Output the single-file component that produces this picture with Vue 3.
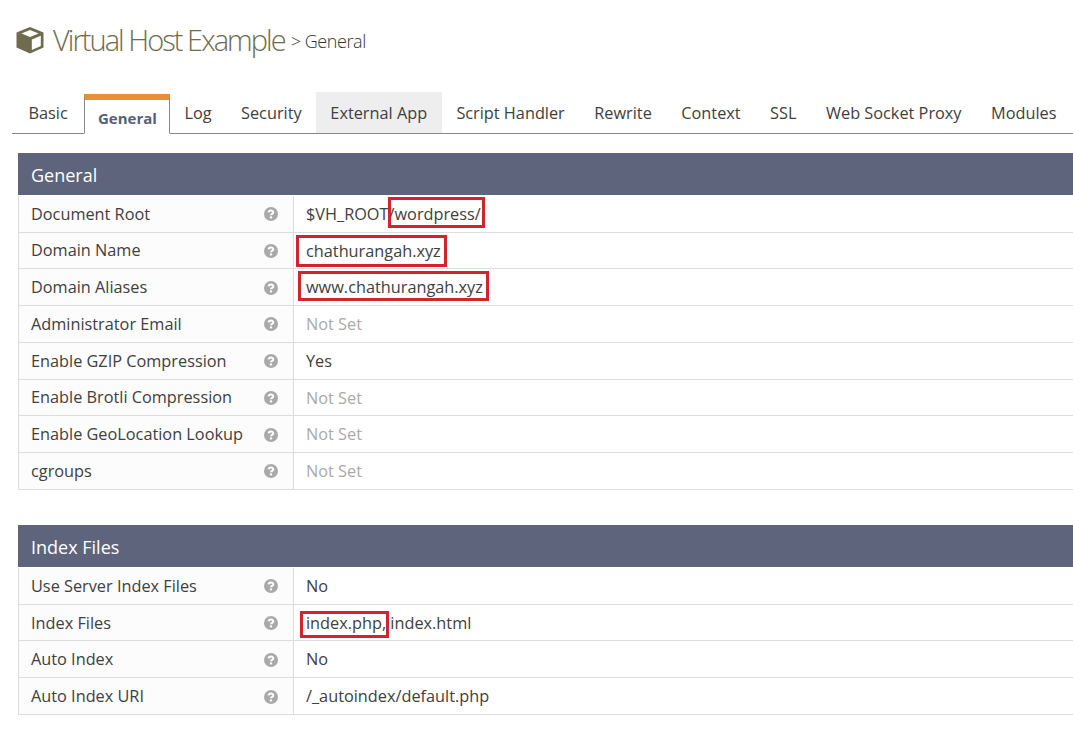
<script setup>
const tabs = ["Basic", "General", "Log", "Security", "External App", "Script Handler", "Rewrite", "Context", "SSL", "Web Socket Proxy", "Modules"]

const sections = [
  {
    title: "General",
    rows: [
      { label: "Document Root", parts: [{ text: "$VH_ROOT" }, { text: "/wordpress/", mark: "m-root" }] },
      { label: "Domain Name", parts: [{ text: "chathurangah.xyz", mark: "m-name" }] },
      { label: "Domain Aliases", parts: [{ text: "www.chathurangah.xyz", mark: "m-alias" }] },
      { label: "Administrator Email", unset: true },
      { label: "Enable GZIP Compression", parts: [{ text: "Yes" }] },
      { label: "Enable Brotli Compression", unset: true },
      { label: "Enable GeoLocation Lookup", unset: true },
      { label: "cgroups", unset: true },
    ],
  },
  {
    title: "Index Files",
    rows: [
      { label: "Use Server Index Files", parts: [{ text: "No" }] },
      { label: "Index Files", parts: [{ text: "index.php,", mark: "m-index" }, { text: " index.html" }] },
      { label: "Auto Index", parts: [{ text: "No" }] },
      { label: "Auto Index URI", parts: [{ text: "/_autoindex/default.php" }] },
    ],
  },
]
</script>

<template>
  <div class="page">
    <h1 class="title">
      <svg class="cube" width="28" height="28" viewBox="0 0 28 28">
        <path d="M14 1 L27.5 6.5 V21.5 L14 27.5 L0.5 21.5 V6.5 Z" fill="#6f6b4f" />
        <path d="M14 4 L22.6 7.6 L14 11 L5.4 7.6 Z" fill="#fff" />
        <path d="M15.8 13.4 L24.8 9.8 V20 L15.8 24 Z" fill="#fff" />
      </svg>
      <span class="title-main">Virtual Host Example</span>
      <span class="title-sub">&gt; General</span>
    </h1>

    <ul class="tabs">
      <li
        v-for="tab in tabs"
        :key="tab"
        :class="{ active: tab === 'General', hover: tab === 'External App' }"
      >
        {{ tab }}
      </li>
    </ul>

    <section v-for="sec in sections" :key="sec.title" class="panel">
      <header>{{ sec.title }}</header>
      <div class="rows">
        <div v-for="row in sec.rows" :key="row.label" class="row">
          <div class="label">
            <span>{{ row.label }}</span>
            <svg class="help" width="14" height="14" viewBox="0 0 14 14">
              <circle cx="7" cy="7" r="7" fill="#a9a9a9" />
              <path d="M4.7 5.4 C4.8 3 9.3 2.9 9.3 5.4 C9.3 6.9 7 6.8 7 8.3" fill="none" stroke="#fff" stroke-width="2" />
              <rect x="5.9" y="9.4" width="2.2" height="2" fill="#fff" />
            </svg>
          </div>
          <div class="value">
            <span v-if="row.unset" class="unset">Not Set</span>
            <template v-else>
              <span v-for="part in row.parts" :key="part.text" :class="part.mark">{{ part.text }}</span>
            </template>
          </div>
        </div>
      </div>
    </section>
  </div>
</template>

<style scoped>
.page {
  width: 1073px;
  height: 737px;
  overflow: hidden;
  background: #fff;
  font-family: "Open Sans", "Liberation Sans", sans-serif;
  color: #404040;
  font-size: 16.3px;
}

.title {
  display: flex;
  align-items: center;
  margin: 0;
  padding: 8px 0 0 15.5px;
  height: 70px;
  box-sizing: border-box;
  font-weight: 300;
}

.cube {
  margin-right: 9.5px;
  margin-top: 1px;
}

.title-main {
  font-size: 29px;
  letter-spacing: -1.95px;
  color: #6f6b4f;
}

.title-sub {
  font-size: 18px;
  letter-spacing: -0.42px;
  color: #333;
  margin-left: 6px;
  margin-top: 3px;
}

.tabs {
  display: flex;
  list-style: none;
  margin: 23px 0 19px 12px;
  padding: 0 0 0 1.75px;
  height: 40px;
  border-bottom: 1px solid #888;
}

.tabs li {
  padding: 9px 14.75px 0;
  height: 40px;
  box-sizing: border-box;
  line-height: 22px;
}

.tabs li.hover {
  background: #eee;
  padding-left: 14px;
  padding-right: 14.5px;
  margin-top: -1px;
  padding-top: 10px;
  height: 41px;
}

.tabs li.active {
  height: 40px;
  margin-top: 1px;
  margin-left: 2px;
  margin-right: -0.75px;
  padding: 7px 12.5px 0 12.5px;
  border: 1px solid #888;
  border-top: 6px solid #e69138;
  border-bottom: 1px solid #fff;
  font-weight: 700;
  font-size: 15px;
  color: #566078;
}

.panel {
  margin: 0 -40px 35.4px 18px;
}

.panel header {
  height: 42px;
  line-height: 44px;
  padding-left: 13px;
  font-size: 18px;
  background: #5f647d;
  color: #fff;
}

/* fractional offset so the row lines land where the 36.75px rows fall in the original */
.rows {
  padding-top: 0.8px;
}

.row {
  display: flex;
  height: 36.75px;
  box-sizing: border-box;
  border-bottom: 1px solid #ddd;
  border-left: 1px solid #ddd;
  line-height: 38px;
}

.label {
  display: flex;
  justify-content: space-between;
  align-items: center;
  width: 275px;
  flex: none;
  box-sizing: border-box;
  padding: 0 15.5px 0 12px;
  border-right: 1px solid #ddd;
  background: #fcfcfc;
}

.help {
  flex: none;
  margin-top: 1px;
}

.value {
  padding-left: 12px;
  position: relative;
  white-space: pre;
  line-height: 36px;
}

.unset {
  color: #aaa;
}

/* red annotation boxes drawn over the screenshot */
.m-root,
.m-name,
.m-alias,
.m-index {
  position: relative;
}

.m-root::after,
.m-name::after,
.m-alias::after,
.m-index::after {
  content: "";
  position: absolute;
  border: 3px solid #d2232f;
  box-sizing: border-box;
}

.m-root::after {
  left: -1px;
  right: -4px;
  top: -6px;
  bottom: -3px;
}

.m-name::after {
  left: -10px;
  right: -6px;
  top: -5px;
  bottom: -5px;
}

.m-alias::after {
  left: -8px;
  right: -6px;
  top: -5px;
  bottom: -3px;
}

.m-index::after {
  left: -6px;
  right: -3px;
  top: -1px;
  bottom: -4px;
}
</style>

<style>
html,
body {
  margin: 0;
  background: #fff;
}
</style>
